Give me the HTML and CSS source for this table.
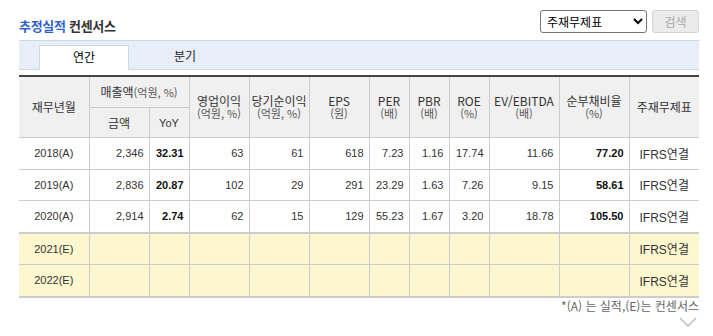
FILE: index.html
```html
<!DOCTYPE html>
<html lang="ko">
<head>
<meta charset="utf-8">
<title>추정실적 컨센서스</title>
<link rel="stylesheet" href="styles.css">
</head>
<body>
<div class="wrap">
  <div class="top">
    <h2 class="title"><span class="blue">추정실적</span> 컨센서스</h2>
    <div class="controls">
      <select class="sel"><option>주재무제표</option><option>별도</option></select>
      <button class="btn" type="button">검색</button>
    </div>
  </div>
  <div class="tabs">
    <div class="tab active">연간</div>
    <div class="tab">분기</div>
  </div>
  <table class="fin">
    <colgroup>
      <col class="w70"><col class="w60"><col class="w40"><col class="w60"><col class="w60"><col class="w60">
      <col class="w40"><col class="w40"><col class="w40"><col class="w70"><col class="w70"><col class="w70">
    </colgroup>
    <thead>
      <tr class="h1">
        <th rowspan="2" class="first">재무년월</th>
        <th colspan="2">매출액<span class="unit">(억원, %)</span></th>
        <th rowspan="2"><span class="l1">영업이익</span><span class="u2">(억원, %)</span></th>
        <th rowspan="2"><span class="l1">당기순이익</span><span class="u2">(억원, %)</span></th>
        <th rowspan="2"><span class="l1">EPS</span><span class="u2">(원)</span></th>
        <th rowspan="2"><span class="l1">PER</span><span class="u2">(배)</span></th>
        <th rowspan="2"><span class="l1">PBR</span><span class="u2">(배)</span></th>
        <th rowspan="2"><span class="l1">ROE</span><span class="u2">(%)</span></th>
        <th rowspan="2"><span class="l1">EV/EBITDA</span><span class="u2">(배)</span></th>
        <th rowspan="2"><span class="l1">순부채비율</span><span class="u2">(%)</span></th>
        <th rowspan="2">주재무제표</th>
      </tr>
      <tr class="h2">
        <th>금액</th>
        <th class="yoy">YoY</th>
      </tr>
    </thead>
    <tbody>
      <tr>
        <td class="yr first">2018(A)</td><td>2,346</td><td class="b">32.31</td><td>63</td><td>61</td><td>618</td><td>7.23</td><td>1.16</td><td>17.74</td><td>11.66</td><td class="b">77.20</td><td class="ifrs">IFRS연결</td>
      </tr>
      <tr>
        <td class="yr first">2019(A)</td><td>2,836</td><td class="b">20.87</td><td>102</td><td>29</td><td>291</td><td>23.29</td><td>1.63</td><td>7.26</td><td>9.15</td><td class="b">58.61</td><td class="ifrs">IFRS연결</td>
      </tr>
      <tr class="last-a">
        <td class="yr first">2020(A)</td><td>2,914</td><td class="b">2.74</td><td>62</td><td>15</td><td>129</td><td>55.23</td><td>1.67</td><td>3.20</td><td>18.78</td><td class="b">105.50</td><td class="ifrs">IFRS연결</td>
      </tr>
      <tr class="est">
        <td class="yr first">2021(E)</td><td></td><td></td><td></td><td></td><td></td><td></td><td></td><td></td><td></td><td></td><td class="ifrs">IFRS연결</td>
      </tr>
      <tr class="est">
        <td class="yr first">2022(E)</td><td></td><td></td><td></td><td></td><td></td><td></td><td></td><td></td><td></td><td></td><td class="ifrs">IFRS연결</td>
      </tr>
    </tbody>
  </table>
  <p class="note">*(A) 는 실적,(E)는 컨센서스</p>
  <div class="more">
    <svg width="18" height="10" viewBox="0 0 18 10" aria-hidden="true"><polyline points="1,1 9,9 17,1" fill="none" stroke="#bdbdbd" stroke-width="1.5"/></svg>
  </div>
</div>
</body>
</html>
```
FILE: styles.css
```css
html, body {
  margin: 0;
  padding: 0;
  background: #fff;
}
body {
  font-family: "Noto Sans CJK KR", "Liberation Sans", sans-serif;
  color: #333;
}
.wrap {
  width: 680px;
  margin-left: 19px;
}
.top {
  display: flex;
  justify-content: space-between;
  align-items: flex-start;
  height: 30px;
  padding-top: 10px;
}
.title {
  margin: 8px 0 0 0;
  font-size: 13px;
  line-height: 16px;
  font-weight: bold;
  color: #333;
  letter-spacing: -0.3px;
}
.title .blue {
  color: #2f62d0;
}
.controls {
  display: flex;
  gap: 5px;
}
.sel {
  width: 107px;
  height: 23px;
  font-family: "Noto Sans CJK KR", sans-serif;
  font-size: 12px;
  color: #000;
  border: 1px solid #767676;
  border-radius: 3px;
  background: #fff;
  padding: 0 2px;
}
.btn {
  width: 47px;
  height: 23px;
  font-family: "Noto Sans CJK KR", sans-serif;
  font-size: 12px;
  color: #a8a8a8;
  background: #ebebeb;
  border: 1px solid #d4d4d4;
  border-radius: 3px;
  padding: 0;
}
.tabs {
  display: flex;
  align-items: flex-end;
  height: 28px;
  padding-left: 20px;
  background: #e8eef8;
  border-top: 1px solid #cdd7e6;
  border-bottom: 1px solid #cdd7e6;
}
.tab {
  width: 112px;
  height: 25px;
  box-sizing: border-box;
  font-size: 12px;
  line-height: 22px;
  text-align: center;
  color: #222;
  margin-bottom: -1px;
}
.tab.active {
  width: 90px;
  background: #fff;
  border: 1px solid #cdd7e6;
  border-bottom: none;
  color: #000;
}
.fin {
  margin-top: 5px;
  width: 680px;
  border-collapse: collapse;
  table-layout: fixed;
  border-top: 2px solid #444;
  border-bottom: 2px solid #cccccc;
}
.w70 { width: 70px; }
.w60 { width: 60px; }
.w40 { width: 40px; }
.fin th {
  background: #f0f0f0;
  font-weight: normal;
  font-size: 12px;
  line-height: 14px;
  color: #333;
  border-left: 1px solid #cccccc;
  border-bottom: 1px solid #cccccc;
  padding: 0;
  white-space: nowrap;
}
.fin .h1 th {
  height: 30px;
}
.fin .h2 th {
  height: 29px;
}
.fin th.first,
.fin td.first {
  border-left: none;
}
.fin th .unit {
  font-size: 11px;
  color: #555;
}
.fin th .l1 {
  display: block;
  line-height: 13px;
}
.fin th .u2 {
  display: block;
  font-size: 11px;
  line-height: 13px;
  color: #555;
}
.fin th.yoy {
  font-family: "Liberation Sans", sans-serif;
  font-size: 11px;
}
.fin td {
  height: 30.5px;
  padding: 0 5px 0 0;
  font-family: "Liberation Sans", sans-serif;
  font-size: 11px;
  color: #333;
  text-align: right;
  border-left: 1px solid #cccccc;
  border-bottom: 1px solid #cccccc;
  white-space: nowrap;
}
.fin td.yr {
  text-align: center;
  padding: 0;
}
.fin td.b {
  color: #111;
  font-weight: bold;
}
.fin td.ifrs {
  text-align: center;
  padding: 0;
  font-family: "Liberation Sans", "Noto Sans CJK KR", sans-serif;
  font-size: 12px;
}
.fin tr.last-a td {
  border-bottom: 2px solid #cccccc;
}
.fin tr.est td {
  background: #fdf7cf;
}
.note {
  margin: 1px 0 0 0;
  font-size: 12px;
  line-height: 14px;
  color: #666;
  text-align: right;
}
.more {
  display: flex;
  justify-content: flex-end;
  padding-right: 2px;
  margin-top: 4px;
}
.more svg {
  display: block;
}
```
